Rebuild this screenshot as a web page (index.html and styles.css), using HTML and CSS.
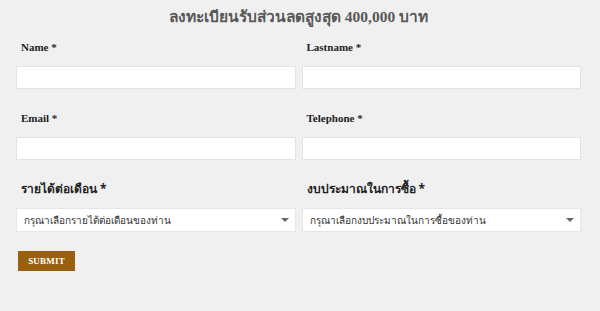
FILE: index.html
```html
<!DOCTYPE html>
<html lang="th">
<head>
    <meta charset="UTF-8">
    <meta name="viewport" content="width=device-width, initial-scale=1.0">
    <title>ลงทะเบียนรับส่วนลด</title>
    <link rel="stylesheet" href="styles.css">
</head>
<body>
    <div class="container">
        <h2 class="title">ลงทะเบียนรับส่วนลดสูงสุด 400,000 บาท</h2>

        <form class="form">
            <div class="field">
                <label>Name *</label>
                <input type="text" class="input">
            </div>
            <div class="field">
                <label>Lastname *</label>
                <input type="text" class="input">
            </div>
            <div class="field">
                <label>Email *</label>
                <input type="email" class="input">
            </div>
            <div class="field">
                <label>Telephone *</label>
                <input type="tel" class="input">
            </div>
            <div class="field">
                <label class="thai">รายได้ต่อเดือน *</label>
                <div class="select-box">
                    <select class="select">
                        <option>กรุณาเลือกรายได้ต่อเดือนของท่าน</option>
                    </select>
                </div>
            </div>
            <div class="field">
                <label class="thai">งบประมาณในการซื้อ *</label>
                <div class="select-box">
                    <select class="select">
                        <option>กรุณาเลือกงบประมาณในการซื้อของท่าน</option>
                    </select>
                </div>
            </div>
            <div class="actions">
                <button type="button" class="submit">SUBMIT</button>
            </div>
        </form>
    </div>
</body>
</html>
```

FILE: styles.css
```css
body {
    margin: 0;
    background: #f0f0f0;
    font-family: "Liberation Serif", "Times New Roman", serif;
    color: #222;
}

.container {
    width: 565px;
    padding-left: 16px;
}

.title {
    margin: 0;
    padding-top: 7px;
    height: 33px;
    line-height: 20px;
    font-size: 15.5px;
    font-weight: bold;
    color: #585858;
    text-align: center;
}

.form {
    display: grid;
    grid-template-columns: 1fr 1fr;
    column-gap: 6px;
    row-gap: 22px;
}

.field label {
    display: block;
    padding-left: 5px;
    margin-bottom: 12px;
    font-size: 11px;
    line-height: 14px;
    font-weight: bold;
    color: #222;
}

.field label.thai {
    font-family: Tahoma, "Noto Sans", sans-serif;
    font-size: 12px;
    padding-left: 5px;
}

.input {
    display: block;
    width: 100%;
    height: 23px;
    box-sizing: border-box;
    border: 1px solid #e3e3e3;
    background: #fff;
    outline: none;
}

.select-box {
    position: relative;
}

.select {
    display: block;
    width: 100%;
    height: 24px;
    box-sizing: border-box;
    padding: 0 20px 0 7px;
    border: 1px solid #e6e6e6;
    background: #fff;
    -webkit-appearance: none;
    appearance: none;
    font-family: Tahoma, "Noto Sans", sans-serif;
    font-size: 10px;
    color: #333;
    outline: none;
}

.select-box::after {
    content: "";
    position: absolute;
    right: 7px;
    top: 10px;
    border-left: 4px solid transparent;
    border-right: 4px solid transparent;
    border-top: 4px solid #666;
}

.actions {
    grid-column: 1 / 3;
    margin-top: -4px;
}

.submit {
    margin-left: 2px;
    width: 57px;
    height: 20px;
    padding: 0;
    border: none;
    background: #98600f;
    color: #fff;
    font-family: "Liberation Serif", serif;
    font-size: 9px;
    font-weight: bold;
    letter-spacing: 0.2px;
}
```
